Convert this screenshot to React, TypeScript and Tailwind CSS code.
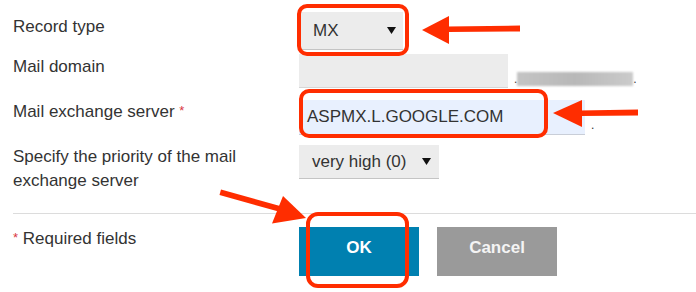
import React from 'react';

const Caret = () => (
  <svg width="9" height="7" viewBox="0 0 9 7" className="shrink-0">
    <path d="M0 0 H9 L4.5 7 Z" fill="#111" />
  </svg>
);

const Star = () => <span className="text-[13px] text-[#d9363e] align-top relative top-[-1px]">*</span>;

const Annotations = () => (
  <svg className="absolute inset-0 pointer-events-none" width="696" height="292" viewBox="0 0 696 292">
    <g fill="none" stroke="#ff2d00" strokeWidth="4">
      <rect x="299" y="6" width="108" height="48" rx="8" />
      <rect x="301" y="91" width="245" height="45" rx="8" />
      <rect x="308" y="214" width="99" height="72" rx="10" />
    </g>
    <g fill="#ff2d00" stroke="none">
      {/* arrow to record type */}
      <path d="M448 26.5 L520 25.5 L520 31.5 L448 32 Z" />
      <path d="M422 30 L449 16 L449 44 Z" />
      {/* arrow to mail server */}
      <path d="M580 110.5 L638 109.5 L638 115.5 L580 116 Z" />
      <path d="M553 113 L582 100 L582 127 Z" />
      {/* arrow to OK */}
      <path d="M219.5 195 L221 189.5 L280 206 L278.5 211.5 Z" />
      <path d="M306 218 L272 223.5 L283 196 Z" />
    </g>
  </svg>
);

export default function App() {
  return (
    <div className="relative w-[696px] h-[292px] bg-white overflow-hidden text-[17px] text-[#333] font-['Liberation_Sans',Arial,sans-serif]">
      <div className="flex flex-col pt-[12px]">
        {/* record type */}
        <div className="flex items-start">
          <div className="w-[299px] pl-[13px] pt-[3px] leading-[24px]">Record type</div>
          <div className="w-[104px] h-[38px] bg-[#ececec] border-b border-[#c4c4c4] flex items-center justify-between pl-[14px] pr-[7px]">
            <span>MX</span>
            <Caret />
          </div>
        </div>

        {/* mail domain */}
        <div className="flex items-start mt-[4px]">
          <div className="w-[299px] pl-[13px] pt-[1px] leading-[24px]">Mail domain</div>
          <div className="w-[209px] h-[34px] bg-[#ececec] border-b border-[#d6d6d6]" />
          <div className="flex items-end h-[34px] pb-[3px] ml-[6px] text-[12px] leading-none">
            <span>.</span>
            <div className="w-[116px] h-[14px] mb-[-1px] bg-gradient-to-r from-[#c4c4c4] via-[#b8b8b8] to-[#cbcbcb] blur-[1px]" />
            <span>.</span>
          </div>
        </div>

        {/* mail exchange server */}
        <div className="flex items-start mt-[12px]">
          <div className="w-[299px] pl-[13px] leading-[24px]">
            Mail exchange server <Star />
          </div>
          <div className="w-[286px] h-[35px] bg-[#e8f0fe] border-b border-[#c9ced8] flex items-center pl-[8px] pb-[1px]">
            ASPMX.L.GOOGLE.COM
          </div>
          <div className="flex items-end h-[35px] pb-[4px] ml-[6px] text-[12px] leading-none">.</div>
        </div>

        {/* priority */}
        <div className="flex items-start mt-[10px]">
          <div className="w-[299px] pl-[13px] leading-[24px]">
            Specify the priority of the mail
            <br />
            exchange server
          </div>
          <div className="w-[140px] h-[34px] bg-[#ececec] border-b border-[#c4c4c4] flex items-center justify-between pl-[13px] pr-[8px]">
            <span>very high (0)</span>
            <Caret />
          </div>
        </div>

        <div className="ml-[13px] mt-[20px] border-t border-[#dcdcdc]" />

        {/* footer */}
        <div className="flex items-start mt-[13px]">
          <div className="w-[299px] pl-[13px] leading-[24px]">
            <Star /> Required fields
          </div>
          <div className="flex gap-[18px]">
            <button className="w-[120px] h-[49px] pb-[8px] bg-[#0080b0] text-white font-bold">OK</button>
            <button className="w-[120px] h-[49px] pb-[8px] bg-[#9a9a9a] text-[#f4f4f4] font-bold">Cancel</button>
          </div>
        </div>
      </div>
      <Annotations />
    </div>
  );
}
